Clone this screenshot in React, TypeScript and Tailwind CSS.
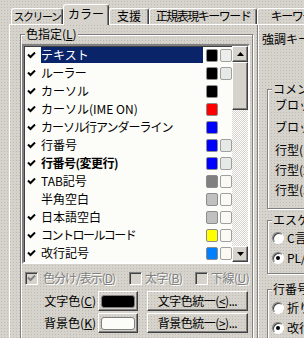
import React from 'react'

type Row = {
  label: string
  fg: string
  bg?: string
  check?: boolean
  bold?: boolean
  selected?: boolean
  track?: string
}

const rows: Row[] = [
  { label: 'テキスト', fg: 'bg-[#000000]', bg: 'bg-[#eceeec]', check: true, selected: true },
  { label: 'ルーラー', fg: 'bg-[#000000]', bg: 'bg-[#e6eae6]', check: true, track: 'tracking-[-0.75px]' },
  { label: 'カーソル', fg: 'bg-[#000000]', check: true },
  { label: 'カーソル(IME ON)', fg: 'bg-[#ff0000]', check: true },
  { label: 'カーソル行アンダーライン', fg: 'bg-[#0000ff]', check: true, track: 'tracking-[-1px]' },
  { label: '行番号', fg: 'bg-[#0000ff]', bg: 'bg-[#e6eae6]', check: true },
  { label: '行番号(変更行)', fg: 'bg-[#0000ff]', bg: 'bg-[#e6eae6]', check: true, bold: true, track: 'tracking-[-0.5px]' },
  { label: 'TAB記号', fg: 'bg-[#808080]', bg: 'bg-[#fbf9f3]', check: true },
  { label: '半角空白', fg: 'bg-[#c0c0c0]', bg: 'bg-[#fbf9f3]' },
  { label: '日本語空白', fg: 'bg-[#c0c0c0]', bg: 'bg-[#fbf9f3]', check: true },
  { label: 'コントロールコード', fg: 'bg-[#ffff00]', bg: 'bg-[#fbf9f3]', check: true, track: 'tracking-[-1.5px]' },
  { label: '改行記号', fg: 'bg-[#0080ff]', bg: 'bg-[#fbf9f3]', check: true },
]

function Check({ color = '#000' }: { color?: string }) {
  return (
    <svg width="9" height="7" viewBox="0 0 9 7">
      <path d="M1 2.5 L3.5 5 L8 0.5" stroke={color} strokeWidth="2" fill="none" />
    </svg>
  )
}

function Arrow({ up }: { up?: boolean }) {
  return (
    <svg width="7" height="4" viewBox="0 0 7 4">
      <polygon points={up ? '3.5,0 7,4 0,4' : '0,0 7,0 3.5,4'} fill="#000" />
    </svg>
  )
}

function Tab({ label, w, active, track = '' }: { label: string; w: string; active?: boolean; track?: string }) {
  if (active) {
    return (
      <div
        className={`${w} relative z-10 -mb-px flex h-[21px] shrink-0 items-start justify-center rounded-t-[3px] border-t border-l border-r border-t-white border-l-white border-r-[#404040] bg-[#d6d3cc] pt-[3px] shadow-[inset_-1px_0_0_#808080]`}
      >
        {label}
      </div>
    )
  }
  return (
    <div
      className={`${w} ${track} flex h-[16px] shrink-0 items-start justify-center overflow-hidden rounded-t-[3px] border-t border-l border-r border-t-white border-l-white border-r-[#404040] pt-[1px] shadow-[inset_-1px_0_0_#808080]`}
    >
      {label}
    </div>
  )
}

function Radio({ label, on }: { label: string; on?: boolean }) {
  return (
    <div className="flex h-[13px] items-center gap-[3px] whitespace-nowrap pl-[4px]">
      <span className="flex h-[12px] w-[12px] shrink-0 items-center justify-center rounded-full border border-t-[#808080] border-l-[#808080] border-r-white border-b-white bg-white shadow-[inset_1px_1px_0_#404040]">
        {on && <span className="h-[4px] w-[4px] rounded-full bg-black" />}
      </span>
      {label}
    </div>
  )
}

function Box({ checked }: { checked?: boolean }) {
  return (
    <span className="flex h-[13px] w-[13px] shrink-0 items-center justify-center border border-t-[#808080] border-l-[#808080] border-r-white border-b-white bg-[#d6d3cc] shadow-[inset_1px_1px_0_#404040]">
      {checked && <Check color="#808080" />}
    </span>
  )
}

const raised =
  'border border-t-white border-l-white border-r-[#404040] border-b-[#404040] shadow-[inset_-1px_-1px_0_#808080]'

export default function App() {
  return (
    <div className="h-[338px] w-[304px] overflow-hidden bg-[#d6d3cc] bg-[radial-gradient(#bebab2_0.6px,transparent_0.9px)] bg-size-[3px_3px] font-['Noto_Sans_CJK_JP',sans-serif] text-[12px] leading-[12px] text-black">
      {/* タブ */}
      <div className="flex h-[24px] items-end pl-[11px] whitespace-nowrap">
        <Tab label="スクリーン" w="w-[52px]" track="text-[11px] tracking-[-1.5px]" />
        <Tab label="カラー" w="w-[46px]" active />
        <Tab label="支援" w="w-[40px]" />
        <Tab label="正規表現キーワード" w="w-[108px]" track="tracking-[-1.5px]" />
        <Tab label="キーワード" w="w-[80px]" track="tracking-[-1.5px]" />
      </div>

      {/* パネル */}
      <div className="ml-[9px] flex h-[314px] border-t border-l border-white">
        <fieldset className="ml-[10px] mt-[3px] h-[330px] w-[233px] min-w-0 shrink-0 border border-[#808080] px-[1px] shadow-[inset_1px_1px_0_#fff,1px_1px_0_#fff]">
          <legend className="ml-[3px] bg-[#d6d3cc] px-[1px] leading-[12px]">
            色指定(<u>L</u>)
          </legend>

          {/* リスト */}
          <div className="mt-[4px] flex h-[220px] w-[228px] border-2 border-t-[#808080] border-l-[#808080] border-r-white border-b-white bg-[#fcfcf8] shadow-[inset_1px_1px_0_#404040]">
            <div className="flex w-[208px] flex-col">
              {rows.map((r) => (
                <div key={r.label} className="flex h-[18px] items-center">
                  <span className="flex w-[17px] justify-start pl-[3px]">{r.check && <Check />}</span>
                  <span className="flex h-[18px] w-[163px] items-center">
                    <span
                      className={`flex h-[16px] items-center whitespace-nowrap ${
                        r.selected ? 'w-[162px] bg-[#0a246a] text-white' : ''
                      } ${r.bold ? 'font-bold' : ''} ${r.track ?? ''}`}
                    >
                      {r.label}
                    </span>
                  </span>
                  <span className={`ml-[2px] h-[13px] w-[12px] rounded-[2px] border border-[#8c8c8c] ${r.fg}`} />
                  {r.bg ? (
                    <span className={`ml-[2px] h-[13px] w-[12px] rounded-[2px] border border-[#a0a0a0] ${r.bg}`} />
                  ) : (
                    <span className="ml-[2px] w-[12px]" />
                  )}
                </div>
              ))}
            </div>
            {/* スクロールバー */}
            <div className="flex w-[16px] flex-col">
              <div className={`flex h-[16px] items-center justify-center bg-[#d6d3cc] ${raised}`}>
                <Arrow up />
              </div>
              <div className={`h-[48px] bg-[#d6d3cc] ${raised}`} />
              <div className="flex-1 bg-[repeating-conic-gradient(#d6d3cc_0%_25%,#ffffff_0%_50%)] bg-size-[2px_2px]" />
              <div className={`flex h-[16px] items-center justify-center bg-[#d6d3cc] ${raised}`}>
                <Arrow />
              </div>
            </div>
          </div>

          {/* チェック */}
          <div className="mt-[7px] ml-[3px] flex h-[14px] items-center whitespace-nowrap text-[#808080] [text-shadow:1px_1px_0_#fff]">
            <span className="flex w-[104px] shrink-0 items-center gap-[5px]">
              <Box checked />
              <span className="tracking-[-1px]">
                色分け/表示(<u>D</u>)
              </span>
            </span>
            <span className="flex w-[66px] shrink-0 items-center gap-[3px]">
              <Box />
              <span className="tracking-[-0.5px]">
                太字(<u>B</u>)
              </span>
            </span>
            <span className="flex items-center gap-[3px]">
              <Box />
              <span className="tracking-[-0.5px]">
                下線(<u>U</u>)
              </span>
            </span>
          </div>

          {/* 色ボタン */}
          <div className="mt-[6px] flex h-[20px] items-center whitespace-nowrap">
            <span className="w-[74px] shrink-0 text-right">
              文字色(<u>C</u>)
            </span>
            <button className={`ml-[2px] flex h-[20px] w-[40px] shrink-0 items-center justify-center ${raised}`}>
              <span className="h-[13px] w-[34px] rounded-[3px] border border-[#808080] bg-black" />
            </button>
            <button className={`ml-[9px] flex h-[20px] w-[101px] shrink-0 items-center justify-center tracking-[-0.5px] ${raised}`}>
              文字色統一(<u>&lt;</u>)...
            </button>
          </div>
          <div className="mt-[2px] flex h-[20px] items-center whitespace-nowrap">
            <span className="w-[74px] shrink-0 text-right">
              背景色(<u>K</u>)
            </span>
            <button className={`ml-[2px] flex h-[20px] w-[40px] shrink-0 items-center justify-center ${raised}`}>
              <span className="h-[13px] w-[34px] rounded-[3px] border border-[#808080] bg-[#fcfcf8]" />
            </button>
            <button className={`ml-[9px] flex h-[20px] w-[101px] shrink-0 items-center justify-center tracking-[-0.5px] ${raised}`}>
              背景色統一(<u>&gt;</u>)...
            </button>
          </div>
        </fieldset>

        {/* 右側 */}
        <div className="ml-[4px] w-[90px] shrink-0 border-l border-[#808080] pt-[8px] pl-[4px] whitespace-nowrap shadow-[inset_1px_0_0_#fff]">
          <div>強調キーワード</div>

          <fieldset className="mt-[38px] ml-[5px] h-[126px] w-[80px] min-w-0 border border-[#808080] shadow-[inset_1px_1px_0_#fff,1px_1px_0_#fff]">
            <legend className="ml-[4px] bg-[#d6d3cc] px-[1px] leading-[12px]">コメント</legend>
            <div className="pl-[7px]">
              <div className="mt-[4px]">ブロックコメント</div>
              <div className="mt-[10px]">ブロックコメント</div>
              <div className="mt-[11px]">行型(1)</div>
              <div className="mt-[8px]">行型(2)</div>
              <div className="mt-[8px]">行型(3)</div>
            </div>
          </fieldset>

          <fieldset className="mt-[5px] ml-[5px] h-[60px] w-[80px] min-w-0 border border-[#808080] shadow-[inset_1px_1px_0_#fff,1px_1px_0_#fff]">
            <legend className="ml-[4px] bg-[#d6d3cc] px-[1px] leading-[12px]">エスケープ記号</legend>
            <div className="mt-[5px]">
              <Radio label="C言語風" />
            </div>
            <div className="mt-[7px]">
              <Radio label="PL/SQL風" on />
            </div>
          </fieldset>

          <fieldset className="mt-[9px] ml-[5px] h-[70px] w-[80px] min-w-0 border border-[#808080] shadow-[inset_1px_1px_0_#fff,1px_1px_0_#fff]">
            <legend className="ml-[4px] bg-[#d6d3cc] px-[1px] leading-[12px]">行番号の表示</legend>
            <div className="mt-[6px]">
              <Radio label="折り返し行" />
            </div>
            <div className="mt-[7px]">
              <Radio label="改行単位" on />
            </div>
          </fieldset>
        </div>
      </div>
    </div>
  )
}
